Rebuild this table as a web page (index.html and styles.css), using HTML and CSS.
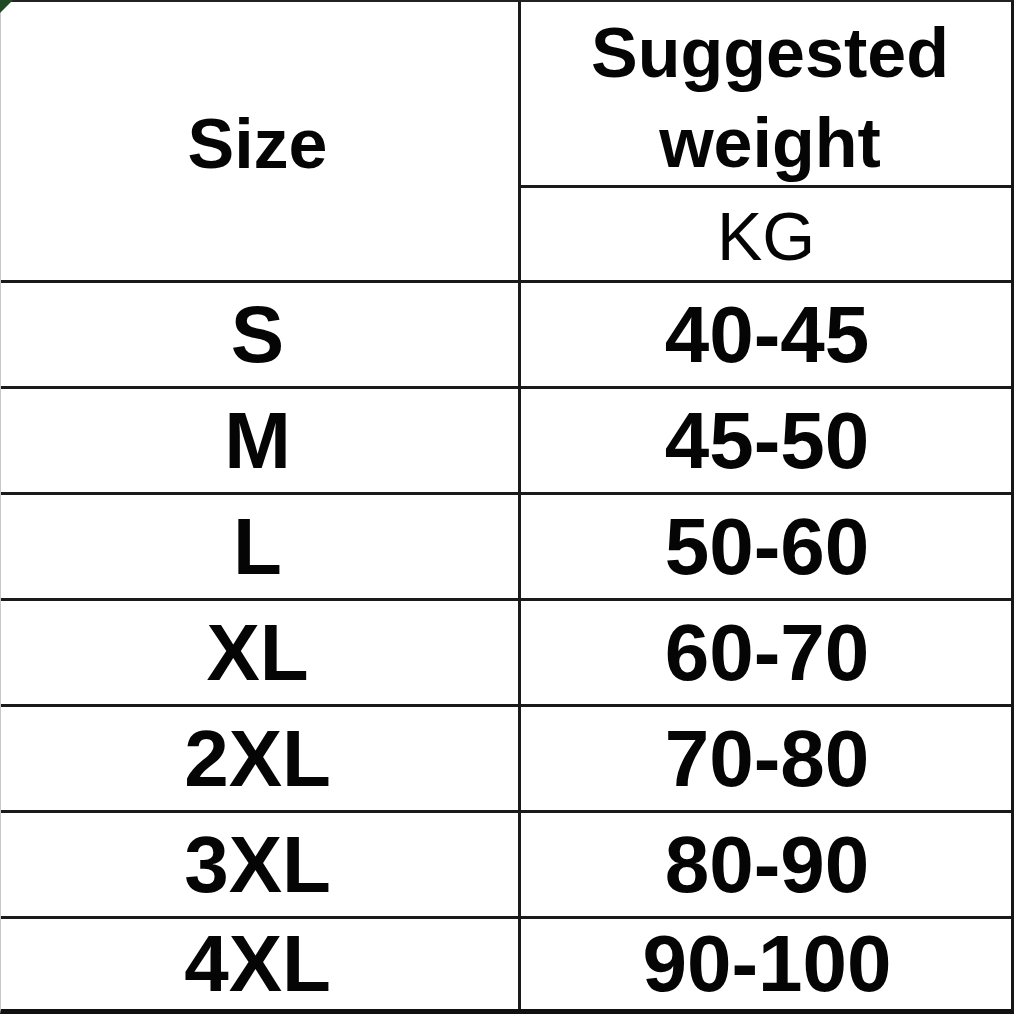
FILE: index.html
```html
<!DOCTYPE html>
<html>
<head>
<meta charset="utf-8">
<link rel="stylesheet" href="styles.css">
</head>
<body>
<div class="sheet">
  <span class="corner"></span>
  <div class="cell head left">Size</div>
  <div class="cell head right">
    <div class="sub-title">Suggested<br>weight</div>
    <div class="sub-unit">KG</div>
  </div>
  <div class="cell left">S</div><div class="cell right">40-45</div>
  <div class="cell left">M</div><div class="cell right">45-50</div>
  <div class="cell left">L</div><div class="cell right">50-60</div>
  <div class="cell left">XL</div><div class="cell right">60-70</div>
  <div class="cell left">2XL</div><div class="cell right">70-80</div>
  <div class="cell left">3XL</div><div class="cell right">80-90</div>
  <div class="cell left last">4XL</div><div class="cell right last">90-100</div>
</div>
</body>
</html>
```
FILE: styles.css
```css
html, body {
  margin: 0;
  padding: 0;
  background: #ffffff;
}
body {
  width: 1017px;
  height: 1017px;
  overflow: hidden;
  font-family: "Liberation Sans", Arial, sans-serif;
  color: #050505;
}
.sheet {
  position: relative;
  box-sizing: border-box;
  width: 1014px;
  height: 1014px;
  border-top: 2px solid #222;
  border-left: 1px solid #c8c8c8;
  border-right: 3px solid #161616;
  border-bottom: 5px solid #111;
  display: grid;
  grid-template-columns: 520px 1fr;
  grid-template-rows: 281px repeat(6, 106px) 1fr;
}
.corner {
  position: absolute;
  left: -1px;
  top: -2px;
  width: 0;
  height: 0;
  border-top: 13px solid #1f4a22;
  border-right: 13px solid transparent;
}
.cell {
  display: flex;
  align-items: center;
  justify-content: center;
  border-bottom: 3px solid #1a1a1a;
  font-weight: bold;
  font-size: 80px;
  line-height: 1;
}
.cell.left {
  border-right: 3px solid #1a1a1a;
  padding-right: 4px;
}
.cell.right {
  padding-left: 2px;
}
.cell.last {
  border-bottom: none;
}
.cell.head.left {
  font-size: 70px;
  padding-top: 6px;
}
.cell.head.right {
  flex-direction: column;
  align-items: stretch;
  justify-content: flex-start;
  padding-left: 0;
}
.sub-title {
  height: 186px;
  border-bottom: 3px solid #1a1a1a;
  font-size: 70px;
  line-height: 90px;
  text-align: center;
  padding-left: 8px;
  box-sizing: border-box;
  padding-top: 6px;
}
.sub-unit {
  flex: 1;
  display: flex;
  align-items: center;
  justify-content: center;
  font-weight: normal;
  font-size: 68px;
  padding-top: 4px;
}
```
